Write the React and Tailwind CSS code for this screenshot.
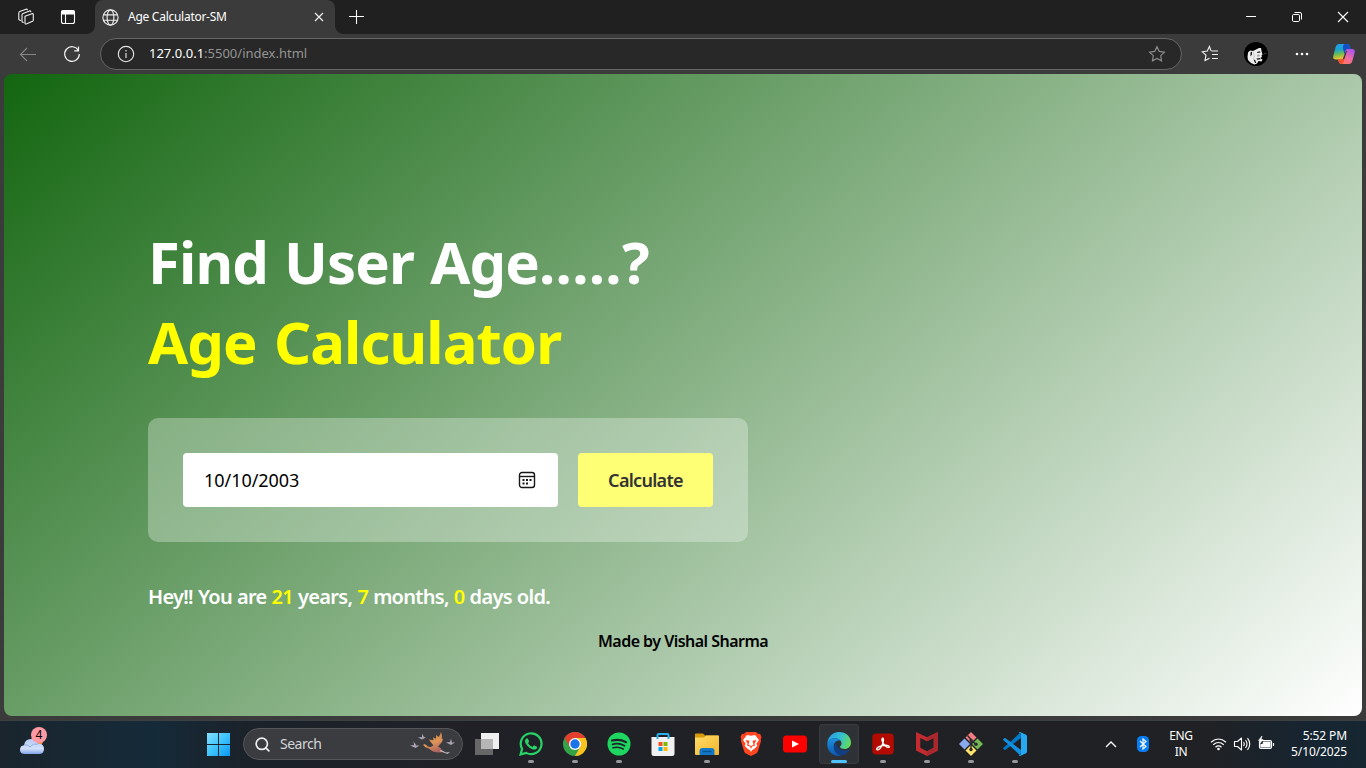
import React from "react";
import { Search } from "lucide-react";

const Slot = ({ children, dot, active }) => (
  <div className={"relative flex h-10 w-10 shrink-0 items-center justify-center rounded " + (active ? "bg-[#2e3136] ring-1 ring-inset ring-[#393b40]" : "")}>
    {children}
    {dot && <span className={"absolute bottom-px h-[3px] rounded-full " + (active ? "w-4 bg-[#4cc2ff]" : "w-1.5 bg-[#96979a]")} />}
  </div>
);

const Collections = () => (
  <svg className="h-[18px] w-[18px]" viewBox="0 0 18 18" fill="none" stroke="#f2f2f2" strokeWidth="1.1" strokeLinejoin="round" strokeLinecap="round">
    <path d="M8 8.2 15 5.7q1.3-.3 1.3 1v5.4q0 .8-.8 1.2l-5.7 2.5Q8 16.5 8 15Z" />
    <path d="M6.300 14.400 5 13.800V7q0-1 1-1.400l6.600-2.700q1.100-.3 1.200.8" />
    <path d="M3.400 12.500 1.800 11.600V5q0-1 1-1.400L9 1.200q1.100-.3 1.400.6" />
  </svg>
);

const Globe = () => (
  <svg className="h-[17px] w-[17px]" viewBox="0 0 17 17" fill="none" stroke="#ececec" strokeWidth="1.15">
    <circle cx="8.5" cy="8.5" r="7.6" /><ellipse cx="8.5" cy="8.5" rx="3.4" ry="7.6" /><path d="M1.400 5.800h14.200M1.400 11.200h14.200" />
  </svg>
);

const starPath = "M8.500 1.600 10.600 6l4.900.7-3.500 3.400.8 4.900-4.300-2.300L4.200 15l.8-4.900L1.500 6.700 6.400 6Z";

const Copilot = () => (
  <svg className="h-6 w-6" viewBox="0 0 24 24">
    <defs>
      <linearGradient id="cpA" x1="0" y1="0" x2=".2" y2="1"><stop stopColor="#279cf0" /><stop offset=".4" stopColor="#16a6cf" /><stop offset=".7" stopColor="#71bd51" /><stop offset="1" stopColor="#f1c52d" /></linearGradient>
      <linearGradient id="cpB" x1=".8" y1="0" x2=".2" y2="1"><stop stopColor="#a950f0" /><stop offset=".5" stopColor="#ee6ba7" /><stop offset="1" stopColor="#ff7957" /></linearGradient>
    </defs>
    <path d="M7 2h8q2 0 2.700 2l.8 3h-3q-1.500 0-2 2l-1.600 6q-.7 2.500-3 2.500H4q-3.500 0-2.700-3.500l2.200-8.500Q4.500 2 7 2Z" fill="url(#cpA)" />
    <path d="M12.500 2H15q2 0 2.700 2l.8 3h-3q-1.500 0-2 2l-1 3.500-1.500-6Q10.500 3 12.500 2Z" fill="#154fc5" />
    <path d="M17 22H9.500q-2 0-2.700-2L6 17.500h3q2 0 2.700-2.500l1.800-6q.5-2 2-2H20q3.500 0 2.700 3.500l-2.200 8Q19.500 22 17 22Z" fill="url(#cpB)" />
    <path d="m6 17.500 1 2.500q.7 2 2.500 2 1.500 0 2-2l.8-3-.6-2q-.7 2.500-2.700 2.500Z" fill="#f0522e" />
    <path d="m13.700 9.500-3 8 1.800-.700 2.700-8.300Z" fill="#3a3a3a" />
  </svg>
);

const Avatar = () => (
  <svg className="h-6 w-6" viewBox="0 0 24 24">
    <circle cx="12" cy="12" r="12" fill="#000" />
    <path d="M3.500 15 4 10.500 6 8.500l3 .5 3-1.500 3-1.500h2l.5 3 1 3.500-1 1 .500 1.500-1 .5-.5 1 2 1-1 2-3-.5-1.500 2.500-2.500 1L7 21l-3-3Z" fill="#ededed" />
    <path d="m6.500 10.500 1.500-1v3l-1.500 2ZM13 10l3-.8.5 1.300-3 .5ZM9.500 17.500l1.500 3.500h1.200l-1-3ZM12.500 16.500l3.200-.5 1 1.200-3.700.5Z" fill="#181818" />
    <path d="m13 13 2-.8 1 1.800-2.500 1Z" fill="#a5a5a5" /><path d="m9 10 1.500 4-1.500 3" fill="none" stroke="#bbb" strokeWidth=".8" /><path d="m19.500 12.500 2-1.500 1 .5" fill="none" stroke="#5a5a5a" strokeWidth=".8" />
  </svg>
);

const Weather = () => (
  <svg className="h-[26px] w-[28px]" viewBox="0 0 28 26">
    <defs><linearGradient id="cl" x2="0" y2="1"><stop stopColor="#b5cdf7" /><stop offset=".65" stopColor="#d2e0fb" /><stop offset="1" stopColor="#7fa4e8" /></linearGradient></defs>
    <circle cx="18" cy="11" r="6" fill="#ef7d22" />
    <path d="M6 24q-5 0-5-4.300 0-4 4-4.400Q6 9 12 9q5 0 7 4.500 6 0 6 5.500 0 5-5 5Z" fill="url(#cl)" />
    <path d="M5 15q4-1 6 2 3-4 8-3" fill="none" stroke="#8cafe9" strokeWidth="1" />
  </svg>
);

const Birds = () => (
  <svg className="h-7 w-12" viewBox="0 0 48 28">
    <defs><linearGradient id="bd" x1=".3" x2=".7" y2="1"><stop stopColor="#b9763f" /><stop offset=".5" stopColor="#e09657" /><stop offset="1" stopColor="#a85f60" /></linearGradient></defs>
    <path d="m13 15.500 2.200-1.300q1.200-.3 2 .8 1.500 2.200 4.300 2l3-1.500-4.700-6 4.700.8-.5-3 3 1.500V5l3 2 2-5 1 4-.5 3 1.500-.5-1 3.500-4 4.500q3 1 4 4l2 1.500-5 .5q-6 0-9.500-3.500l-4.500-2-2-2.300Z" fill="url(#bd)" />
    <path d="m32 20 5 2.500 4-.500-2.500 2-8-3Z" fill="#c6bac5" />
    <path d="m1 15.500 4-.5-.500-3.500 3 4 3 0-4 2.500ZM9 7.500l4-.5V3.500l2 3.500 2 .5-4 2ZM37 12.500l4-.5 1-3.500 1 4 3 0-4 2.500Z" fill="#aaa0af" />
  </svg>
);

const WhatsApp = () => (
  <svg className="h-6 w-6" viewBox="0 0 24 24"><path fill="#25d366" d="M17.472 14.382c-.297-.149-1.758-.867-2.030-.967-.273-.099-.471-.148-.670.150-.197.297-.767.966-.940 1.164-.173.199-.347.223-.644.075-.297-.150-1.255-.463-2.390-1.475-.883-.788-1.480-1.761-1.653-2.059-.173-.297-.018-.458.130-.606.134-.133.298-.347.446-.520.149-.174.198-.298.298-.497.099-.198.050-.371-.025-.520-.075-.149-.669-1.612-.916-2.207-.242-.579-.487-.500-.669-.510-.173-.008-.371-.010-.570-.010-.198 0-.520.074-.792.372-.272.297-1.040 1.016-1.040 2.479 0 1.462 1.065 2.875 1.213 3.074.149.198 2.096 3.200 5.077 4.487.709.306 1.262.489 1.694.625.712.227 1.360.195 1.871.118.571-.085 1.758-.719 2.006-1.413.248-.694.248-1.289.173-1.413-.074-.124-.272-.198-.570-.347" /><path fill="none" stroke="#25d366" strokeWidth="2.200" d="m1.600 22.400 1.500-5.500a10.400 10.400 0 1 1 4.100 4Z" /></svg>
);

const Chrome = () => (
  <svg className="h-6 w-6" viewBox="0 0 24 24">
    <circle cx="12" cy="12" r="12" fill="#34a348" />
    <path d="M1.600 6A12 12 0 0 1 22.400 6H12L6.800 15Z" fill="#e43e2f" />
    <path d="M12 6h10.400A12 12 0 0 1 12 24l5.200-9Z" fill="#fcc31e" />
    <circle cx="12" cy="12" r="6" fill="#fff" /><circle cx="12" cy="12" r="4.700" fill="#1a73e8" />
  </svg>
);

const Spotify = () => (
  <svg className="h-6 w-6" viewBox="0 0 24 24"><circle cx="12" cy="12" r="11.500" fill="#1ed760" /><g fill="none" stroke="#20242a" strokeLinecap="round"><path d="M5 8.500q7.500-2 14 1.600" strokeWidth="2.200" /><path d="M5.500 12.300q6.500-1.800 12 1.500" strokeWidth="1.800" /><path d="M6 15.700q5.500-1.500 10.300 1.300" strokeWidth="1.500" /></g></svg>
);

const Store = () => (
  <svg className="h-6 w-6" viewBox="0 0 24 24">
    <path d="M.500 5h23v16.500q0 2.500-2.500 2.500H3Q.500 24 .500 21.500Z" fill="#f1f1f2" />
    <path d="M6.500 7V3q0-1 1-1h9q1 0 1 1v4" fill="none" stroke="#27b1ec" strokeWidth="2" />
    <path fill="#f25022" d="M7.500 10h4v4h-4z" /><path fill="#7fba00" d="M12.500 10h4v4h-4z" /><path fill="#00a4ef" d="M7.500 15h4v4h-4z" /><path fill="#ffb900" d="M12.500 15h4v4h-4z" />
  </svg>
);

const Folder = () => (
  <svg className="h-6 w-6" viewBox="0 0 24 24">
    <defs><linearGradient id="fd" x2="1" y2="1"><stop stopColor="#ffdc68" /><stop offset="1" stopColor="#f1b42c" /></linearGradient></defs>
    <path d="M0 2.500q0-1 1-1h7l2 2h13q1 0 1 1V10H0Z" fill="#d99a08" />
    <path d="M0 5.500h9l2-2h12q1 0 1 1V22q0 1-1 1H1q-1 0-1-1Z" fill="url(#fd)" />
    <path d="M4.500 23v-4q0-3 3-3h9q3 0 3 3v4Z" fill="#1478c8" /><path d="M7.500 19.500h9" stroke="#075590" strokeWidth="1.400" />
  </svg>
);

const Brave = () => (
  <svg className="h-6 w-6" viewBox="0 0 24 24">
    <path d="M7 0h10l2 2 2-.3L22.500 5l-.7 2 .2 2-3 10q-.5 1.500-1.500 2.200L12 24l-5.500-2.800q-1-.7-1.500-2.200L2 9l.2-2-.7-2L3 1.700 5 2Z" fill="#ff4620" />
    <path d="m8 3 4 .700L16 3l4 5-2.700 3.700 1 2-2.800 3-2.500 1.500L12 20l-1-1.800-2.500-1.500-2.800-3 1-2L4 8Z" fill="#fff" />
    <path d="m6.500 8 4 .700-1 4 2.500 1.300 2.500-1.300-1-4 4-.700-2 3.500.5 2-3 1-1 2.500-1-2.500-3-1 .5-2Z" fill="#ff4620" />
    <path d="M11 5h2l-1 8Z" fill="#fff" />
  </svg>
);

const YouTube = () => (
  <svg className="h-6 w-6" viewBox="0 0 24 24"><rect y="3.500" width="24" height="17" rx="3.500" fill="#f00" /><path d="m9 8.500 7 3.500-7 3.500Z" fill="#fff" /></svg>
);

const Edge = () => (
  <svg className="h-6 w-6" viewBox="0 0 24 24">
    <defs>
      <linearGradient id="eA" x1="0" y1=".3" x2="1" y2=".6"><stop stopColor="#289de0" /><stop offset=".5" stopColor="#32bfd5" /><stop offset="1" stopColor="#65dd57" /></linearGradient>
      <linearGradient id="eB" x2="0" y2="1"><stop stopColor="#1a91df" /><stop offset="1" stopColor="#0d56b0" /></linearGradient>
    </defs>
    <path d="M.3 11C1 4.500 6 0 12 0c7 0 12 4.800 12 10.500 0 4-3 6.500-6.500 6.500-3.200 0-4.500-1.300-4.500-2.300 0-.8 1.500-1.200 1.500-3.200C14.500 8.500 11.500 6.300 8 6.300 4 6.300 1.300 8.500.3 11Z" fill="url(#eA)" />
    <path d="M.2 12C.2 8.500 4 6.200 8 6.200c2.700 0 4.500 1 5.600 2.500C8.500 7.500 6.500 12 6.800 15c.5 5 4.500 8.200 8 8.600-1 .3-2 .4-2.800.4C5 24 .2 18.500.2 12Z" fill="url(#eB)" />
    <path d="M9.800 10.500C7.700 12 6.500 14.500 7 17c1 4.500 4.700 6.500 7.800 6.600 3.500-1 6.200-3 7.700-5.600.3-.5-.3-.9-.8-.6-1.200.6-2.600 1-4.200 1-4.500 0-8.600-3-7.700-7.900Z" fill="#123f82" />
  </svg>
);

const Acrobat = () => (
  <svg className="h-6 w-6" viewBox="0 0 24 24"><rect x="1.300" y="1.500" width="21.500" height="21" rx="4" fill="#b30b00" /><path d="M5.800 17.500c-1-1.500 3-3.500 6-4 3-.5 6.500-.3 6.500 1.200 0 2-4.500-.5-6.300-3.500-1.300-2.300-1.300-5-.3-5 1.500 0 .5 5-1.200 8-1.300 2.500-3.500 4.500-4.700 3.300Z" fill="none" stroke="#fff" strokeWidth="1.400" /></svg>
);

const McAfee = () => (
  <svg className="h-6 w-6" viewBox="0 0 24 24"><path d="m1 0 11 5.200L23 0v18.500L12 24 1 18.500Zm4.300 6v9.800l6.700 3.400 6.700-3.400V6L12 9.300Z" fill="#c32b30" /><path d="M12 5.200 23 0v18.500L12 24v-4.800l6.700-3.400V6L12 9.300Z" fill="#a9282e" /></svg>
);

const Git = () => (
  <svg className="h-6 w-6" viewBox="0 0 24 24">
    <path d="m12 0 5.500 5.500L12 11 6.500 5.500Z" fill="#f47d80" /><path d="m18.500 6.500 5.500 5.500-5.500 5.500L13 12Z" fill="#75b955" />
    <path d="m5.500 6.500 5.500 5.500-5.500 5.500L0 12Z" fill="#86a9ef" /><path d="m12 13 5.500 5.500L12 24l-5.500-5.500Z" fill="#ffe16c" />
    <path d="m8.500 3.500 3.500 4v11M12 8l5 4.500" fill="none" stroke="#272a2e" strokeWidth="1.400" /><circle cx="12" cy="8" r="1.600" fill="#272a2e" /><circle cx="12" cy="17.500" r="1.700" fill="#272a2e" /><circle cx="17" cy="12.300" r="1.700" fill="#272a2e" />
  </svg>
);

const VSCode = () => (
  <svg className="h-6 w-6" viewBox="0 0 24 24">
    <path d="M17.700.2 4.300 12.500.3 15.700q-.6.5 0 1.100l1.100 1q.5.4 1.200 0L18 6Z" fill="#0078c4" />
    <path d="m17.700 23.800-13.400-12.300L.3 8.300q-.6-.5 0-1.100l1.100-1q.5-.4 1.200 0L18 18Z" fill="#1390df" />
    <path d="M17.500.2 22.600 2.500Q24 3.200 24 4.500v15q0 1.300-1.400 2L17.500 23.800q-1 .3-1.700-.5l2.200-.5V1.200l-2.200-.5q.7-.8 1.700-.5Z" fill="#27a9f2" />
  </svg>
);

const Tabs = () => (
  <header className="flex h-[34px] shrink-0 bg-[#202020]">
    <div className="flex w-[95px] items-center gap-6 rounded-br-lg pl-[17px]">
      <Collections />
      <svg className="h-[18px] w-[18px]" viewBox="0 0 18 18" fill="none" stroke="#fff" strokeWidth="1.100"><rect x="2.500" y="2.500" width="13" height="13" rx="2" /><path d="M3 3h12v3H3z" fill="#fff" /><path d="M6.500 6v9" /></svg>
    </div>
    <div className="relative flex w-[240px] items-center rounded-t-lg bg-[#3b3b3b] pl-[7px] pr-2">
      <span className="absolute -left-2 bottom-0 h-2 w-2 bg-[radial-gradient(circle_at_0_0,transparent_7.5px,#3b3b3b_8px)]" />
      <span className="absolute -right-2 bottom-0 h-2 w-2 bg-[radial-gradient(circle_at_100%_0,transparent_7.5px,#3b3b3b_8px)]" />
      <Globe />
      <span className="ml-[9px] flex-1 whitespace-nowrap text-[12px] tracking-[-0.27px] text-white">Age Calculator-SM</span>
      <svg className="mr-[2px] h-3 w-3" viewBox="0 0 12 12" stroke="#eee" strokeWidth="1.200"><path d="m2 2 8 8m0-8-8 8" /></svg>
    </div>
    <svg className="ml-[13px] mt-[9px] h-4 w-4" viewBox="0 0 16 16" stroke="#fff" strokeWidth="1.100"><path d="M8.500 1v14M1 7.500h15" /></svg>
    <div className="ml-auto flex items-center">
      <svg className="h-[34px] w-[46px]" viewBox="0 0 46 34" stroke="#fff"><path d="M18 16.500h10" /></svg>
      <svg className="h-[34px] w-[46px]" viewBox="0 0 46 34" fill="none" stroke="#fff"><rect x="18.500" y="14.500" width="7" height="7" rx="1.200" /><path d="M20.500 12.500h5.500q1.500 0 1.500 1.500v5.500" /></svg>
      <svg className="h-[34px] w-[46px]" viewBox="0 0 46 34" stroke="#fff" strokeWidth="1.100"><path d="m18 12 10 10m0-10-10 10" /></svg>
    </div>
  </header>
);

const Toolbar = () => (
  <div className="flex h-10 shrink-0 items-center bg-[#3b3b3b]">
    <svg className="ml-[19px] h-[17px] w-[18px]" viewBox="0 0 18 17" fill="none" stroke="#858585" strokeWidth="1.100"><path d="M17 8.500H1.500M8 2 1.500 8.500 8 15" /></svg>
    <svg className="ml-[26px] h-[18px] w-[18px]" viewBox="0 0 18 18" fill="none" stroke="#f4f4f4" strokeWidth="1.200"><path d="M15.400 5.500A7.300 7.300 0 1 0 16.300 9M15.500 1.500v4.300h-4.300" /></svg>
    <div className="ml-[19px] flex h-8 w-[1082px] items-center rounded-full border border-[#666] bg-[#282828] pl-4 pr-[15px]">
      <svg className="h-[18px] w-[18px]" viewBox="0 0 18 18" fill="none" stroke="#e4e4e4" strokeWidth="1.150"><circle cx="9" cy="9" r="7.700" /><path d="M9 8v5M9 5v1.500" /></svg>
      <span className="ml-[14px] flex-1 text-[13px] text-[#949494]"><span className="text-white">127.0.0.1</span>:5500/index.html</span>
      <svg className="h-[18px] w-[18px]" viewBox="0 0 17 17" fill="none" stroke="#8b8b8b" strokeWidth="1.100"><path d={starPath} /></svg>
    </div>
    <svg className="ml-[19px] h-[18px] w-[18px]" viewBox="0 0 18 18" fill="none" stroke="#f4f4f4" strokeWidth="1.100"><path d="m10 5.800-1.600-4.300L6.300 6l-5 .8 3.700 3.400-1 5.300 4.500-2.300M10.500 6H17M11 9.500h6M11 13.500h6" /></svg>
    <div className="ml-[25px]"><Avatar /></div>
    <svg className="ml-[26px] h-4 w-4" viewBox="0 0 16 16" fill="#fff"><circle cx="3" cy="8" r="1.300" /><circle cx="8" cy="8" r="1.300" /><circle cx="13" cy="8" r="1.300" /></svg>
    <div className="ml-[22px]"><Copilot /></div>
  </div>
);

const Page = () => (
  <div className="h-[646px] shrink-0 bg-[#3b3b3b] px-1">
    <main className="flex h-[642px] flex-col rounded-lg bg-[linear-gradient(140deg,#136610_0%,#8ab388_50%,#ffffff_100%)] pl-36 pt-[148px]">
      <h1 className="whitespace-nowrap text-[58px] font-bold leading-[80px] text-white">
        <span className="block tracking-[-0.9px] [word-spacing:2px]">Find User Age<span className="tracking-[0.3px]">.....</span>?</span>
        <span className="block tracking-[-0.9px] text-[#ff0] [word-spacing:3px]">Age Calculator</span>
      </h1>
      <div className="mt-9 flex h-[124px] w-[600px] gap-5 rounded-[10px] bg-white/30 p-[35px]">
        <div className="flex h-[54px] w-[375px] items-center justify-between rounded bg-white pl-[21px] pr-[22px] text-[18px] text-black">
          <span className="tracking-[-0.05px]">10/10/2003</span>
          <svg className="h-[18px] w-[18px]" viewBox="0 0 18 18" fill="none" stroke="#171717" strokeWidth="1.400"><rect x="1.500" y="1.500" width="15" height="15" rx="2.500" /><path d="M2 5.500h14" /><path d="M4.500 9h2m1.500 0h2m1.500 0h2m-9 3.500h2m1.500 0h2" strokeWidth="2" /></svg>
        </div>
        <div className="flex h-[54px] w-[135px] items-center justify-center rounded bg-[#ffff76] text-[18px] font-semibold text-[#333]"><span className="tracking-[-0.7px]">Calculate</span></div>
      </div>
      <p className="mt-[41px] whitespace-nowrap text-[20px] font-semibold leading-7 tracking-[-0.7px] text-white [word-spacing:0.5px]">Hey!! You are <span className="text-[#ff0]">21</span> years, <span className="text-[#ff0]">7</span> months, <span className="text-[#ff0]">0</span> days old.</p>
      <p className="ml-[450px] mt-[18px] whitespace-nowrap text-[16px] font-semibold leading-6 tracking-[-0.53px] text-black">Made by Vishal Sharma</p>
    </main>
  </div>
);

const Taskbar = () => (
  <footer className="flex h-[48px] items-center overflow-hidden border-t border-[#3b4043] bg-[linear-gradient(90deg,#1a252d_0%,#152a39_11%,#1b222a_18%,#202126_36%,#202124_88%,#152532_97%,#172731_100%)] pb-px">
    <div className="relative ml-[19px] h-full w-8 pt-[9px]">
      <Weather />
      <span className="absolute left-3 top-[6px] flex h-4 w-4 items-center justify-center rounded-full bg-[#ff99a4] text-[12px] leading-none text-black">4</span>
    </div>
    <svg className="ml-[156px] h-[23px] w-[23px]" viewBox="0 0 23 23"><defs><linearGradient id="win" x2="1" y2="1"><stop stopColor="#87e0ff" /><stop offset=".5" stopColor="#3dc3fc" /><stop offset="1" stopColor="#0797ef" /></linearGradient></defs><path d="M0 0h11v11H0zM12 0h11v11H12zM0 12h11v11H0zM12 12h11v11H12z" fill="url(#win)" /></svg>
    <div className="ml-[13px] flex h-8 w-[220px] items-center rounded-full border border-[#55575b] bg-[#3b3c40] pl-[10px] pr-[5px]">
      <Search className="h-[17px] w-[17px] text-[#eee]" strokeWidth={2.400} />
      <span className="ml-[9px] flex-1 text-[14px] leading-5 tracking-[-0.5px] text-[#d4d5d7]">Search</span>
      <Birds />
    </div>
    <div className="ml-1 flex items-center gap-1">
      <Slot><svg className="h-6 w-6" viewBox="0 0 24 24"><path d="M6 1h18v16H6z" fill="#efefef" /><path d="M0 7h18v16H0z" fill="#676767" /><path d="M6 7h12v10H6z" fill="#b6b6b6" /></svg></Slot>
      <Slot dot><WhatsApp /></Slot><Slot dot><Chrome /></Slot><Slot dot><Spotify /></Slot><Slot><Store /></Slot><Slot dot><Folder /></Slot><Slot><Brave /></Slot><Slot><YouTube /></Slot><Slot dot active><Edge /></Slot><Slot dot><Acrobat /></Slot><Slot dot><McAfee /></Slot><Slot dot><Git /></Slot><Slot dot><VSCode /></Slot>
    </div>
    <div className="ml-auto flex items-center pr-[19px] text-[12px] leading-4 text-white">
      <svg className="h-3 w-3" viewBox="0 0 12 12" fill="none" stroke="#fff" strokeWidth="1.300"><path d="m1 9 5-5 5 5" /></svg>
      <svg className="ml-5 h-4 w-3" viewBox="0 0 12 16"><rect width="12" height="16" rx="4.500" fill="#087df1" /><path d="m3 5 6 5.500L6 13V3l3 2.500L3 11" fill="none" stroke="#fff" strokeWidth="1.100" /></svg>
      <div className="ml-5 w-6 text-center tracking-[-0.3px]">ENG<br />IN</div>
      <svg className="ml-[17px] h-4 w-[17px]" viewBox="0 0 17 16" fill="none" stroke="#fff" strokeWidth="1.200"><path d="M1 6.300q7.500-6.600 15 0M3.200 8.800q5.300-4.600 10.600 0M5.500 11.200q3-2.600 6 0" /><circle cx="8.500" cy="13" r="1.300" fill="#fff" stroke="none" /></svg>
      <svg className="ml-[6px] h-[18px] w-[18px]" viewBox="0 0 18 18" fill="none" stroke="#fff" strokeWidth="1.100" strokeLinejoin="round"><path d="M1.500 6.500h3L8.500 3v12l-4-3.500h-3Z" /><path d="M10.500 7q1.500 2 0 4M12.500 5q3 4 0 8M14.500 3.200q4.500 5.800 0 11.600" /></svg>
      <svg className="ml-[7px] h-[16px] w-[17px]" viewBox="0 0 17 16" fill="none" stroke="#fff" strokeWidth="1.200"><rect x="1.500" y="4.500" width="12" height="8" rx="1.500" /><path d="M5.500 6H12v5H3V8.500h2z" fill="#fff" /><path d="M15.500 7v3" /><path d="M4 0 .5 4.500h2L1.500 8 5 3.500H3Z" fill="#fff" strokeWidth=".6" /></svg>
      <div className="ml-[15px] w-[57px] whitespace-nowrap text-right tracking-[-0.12px]">5:52 PM<br />5/10/2025</div>
    </div>
  </footer>
);

export default function App() {
  return (
    <div className="flex h-[768px] w-[1366px] flex-col overflow-hidden bg-[#3b3b3b] font-['Noto_Sans','Open_Sans',sans-serif]">
      <Tabs />
      <Toolbar />
      <Page />
      <Taskbar />
    </div>
  );
}
